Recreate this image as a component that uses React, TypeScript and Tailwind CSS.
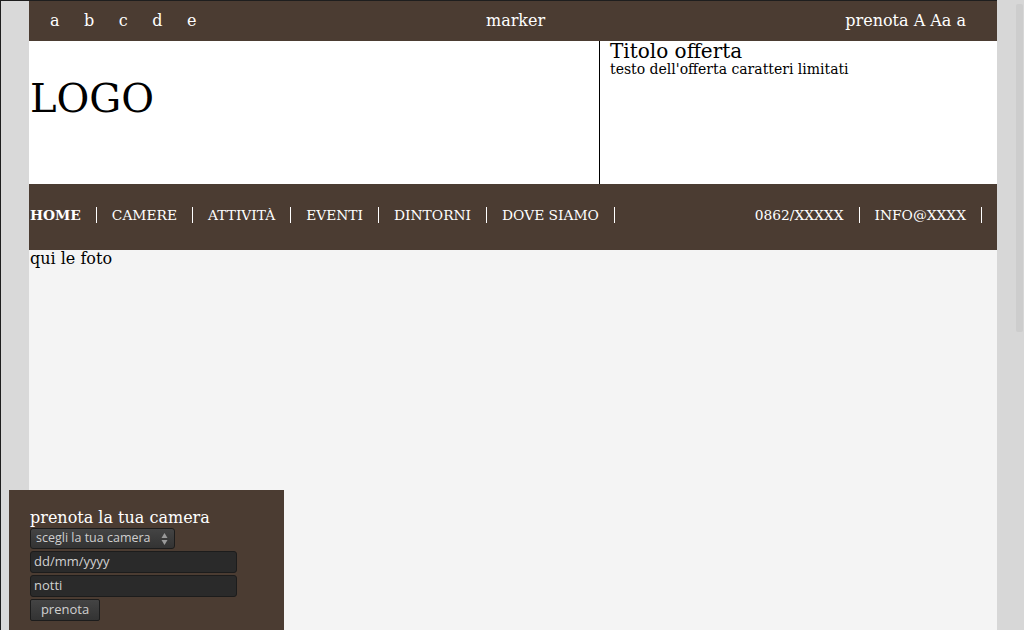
import React from "react";

const serif = { fontFamily: '"DejaVu Serif", serif' };

export default function App() {
  const leftNav = ["CAMERE", "ATTIVITÀ", "EVENTI", "DINTORNI", "DOVE SIAMO"];
  return (
    <div className="relative flex h-[630px] w-[1024px] overflow-hidden bg-[#d7d7d7]" style={serif}>
      <div className="flex h-full w-[997px] shrink-0 border-l border-t border-[#1e1e1e] bg-[#d9d9d9] pl-[28px]">
        <div className="flex h-full w-[968px] flex-col bg-[#f4f4f4]">
          {/* top bar */}
          <div className="flex h-[40px] items-center bg-[#4b3c32] pl-[21px] pr-[31px] text-[16px] text-white">
            <div className="flex w-[436px] shrink-0 gap-[24.5px]">
              <span>a</span>
              <span>b</span>
              <span>c</span>
              <span>d</span>
              <span>e</span>
            </div>
            <div>marker</div>
            <div className="flex flex-1 justify-end">prenota A Aa a</div>
          </div>
          {/* header */}
          <div className="flex h-[143px] bg-white text-black">
            <div className="flex w-[570px] items-center pl-px pb-[30px] text-[40px] leading-none">LOGO</div>
            <div className="flex-1 border-l border-black pl-[10px]">
              <div className="text-[20px] leading-[21px]">Titolo offerta</div>
              <div className="text-[14px] leading-[15px]">testo dell'offerta caratteri limitati</div>
            </div>
          </div>
          {/* nav */}
          <div className="flex h-[66px] items-center justify-between bg-[#4b3c32] pl-px pr-[15px] pb-[4px] text-[13.8px] text-white">
            <div className="flex items-center">
              <span className="border-r border-white pr-[15px] font-bold leading-[16px]">HOME</span>
              {leftNav.map((n) => (
                <span key={n} className="border-r border-white px-[15px] leading-[16px]">
                  {n}
                </span>
              ))}
            </div>
            <div className="flex items-center">
              <span className="border-r border-white px-[15px] leading-[16px]">0862/XXXXX</span>
              <span className="border-r border-white px-[15px] leading-[16px]">INFO@XXXX</span>
            </div>
          </div>
          <div className="pl-px text-[16px] leading-[18px] text-black">qui le foto</div>
        </div>
      </div>
      <div className="flex flex-1 justify-end pr-[1px] pt-[4px]">
        <div className="h-[328px] w-[7px] rounded-[2px] bg-[#cdcdcd]" />
      </div>

      {/* booking box overlay */}
      <div className="absolute left-[9px] top-[490px] h-[140px] w-[275px] bg-[#4b3c32] pl-[21px] pt-[18px]">
        <div className="text-[16px] leading-[20px] text-white">prenota la tua camera</div>
        <div className="flex flex-col items-start gap-[2px]" style={{ fontFamily: '"Open Sans", "DejaVu Sans", sans-serif' }}>
          <div className="flex h-[21px] w-[145px] items-center justify-between rounded-[3px] border border-[#1c1c1c] bg-gradient-to-b from-[#444] to-[#333] pl-[5px] pr-[6px] text-[12.5px] text-[#cfcfcf]">
            <span>scegli la tua camera</span>
            <svg width="7" height="14" viewBox="0 0 7 14" className="shrink-0">
              <path d="M3.5 1 L6.5 6 L0.5 6 Z" fill="#9a9a9a" />
              <path d="M3.5 13 L6.5 8 L0.5 8 Z" fill="#9a9a9a" />
            </svg>
          </div>
          <div className="flex h-[22px] w-[207px] items-center rounded-[3px] border border-[#1c1c1c] bg-[#2a2a2a] pl-[3px] text-[13px] text-[#d0d0d0]">
            dd/mm/yyyy
          </div>
          <div className="flex h-[22px] w-[207px] items-center rounded-[3px] border border-[#1c1c1c] bg-[#2a2a2a] pl-[3px] text-[13px] text-[#d0d0d0]">
            notti
          </div>
          <div className="flex h-[22px] w-[70px] items-center justify-center rounded-[2px] border border-[#1c1c1c] bg-gradient-to-b from-[#444] to-[#333] text-[13px] text-[#d0d0d0]">
            prenota
          </div>
        </div>
      </div>
    </div>
  );
}
